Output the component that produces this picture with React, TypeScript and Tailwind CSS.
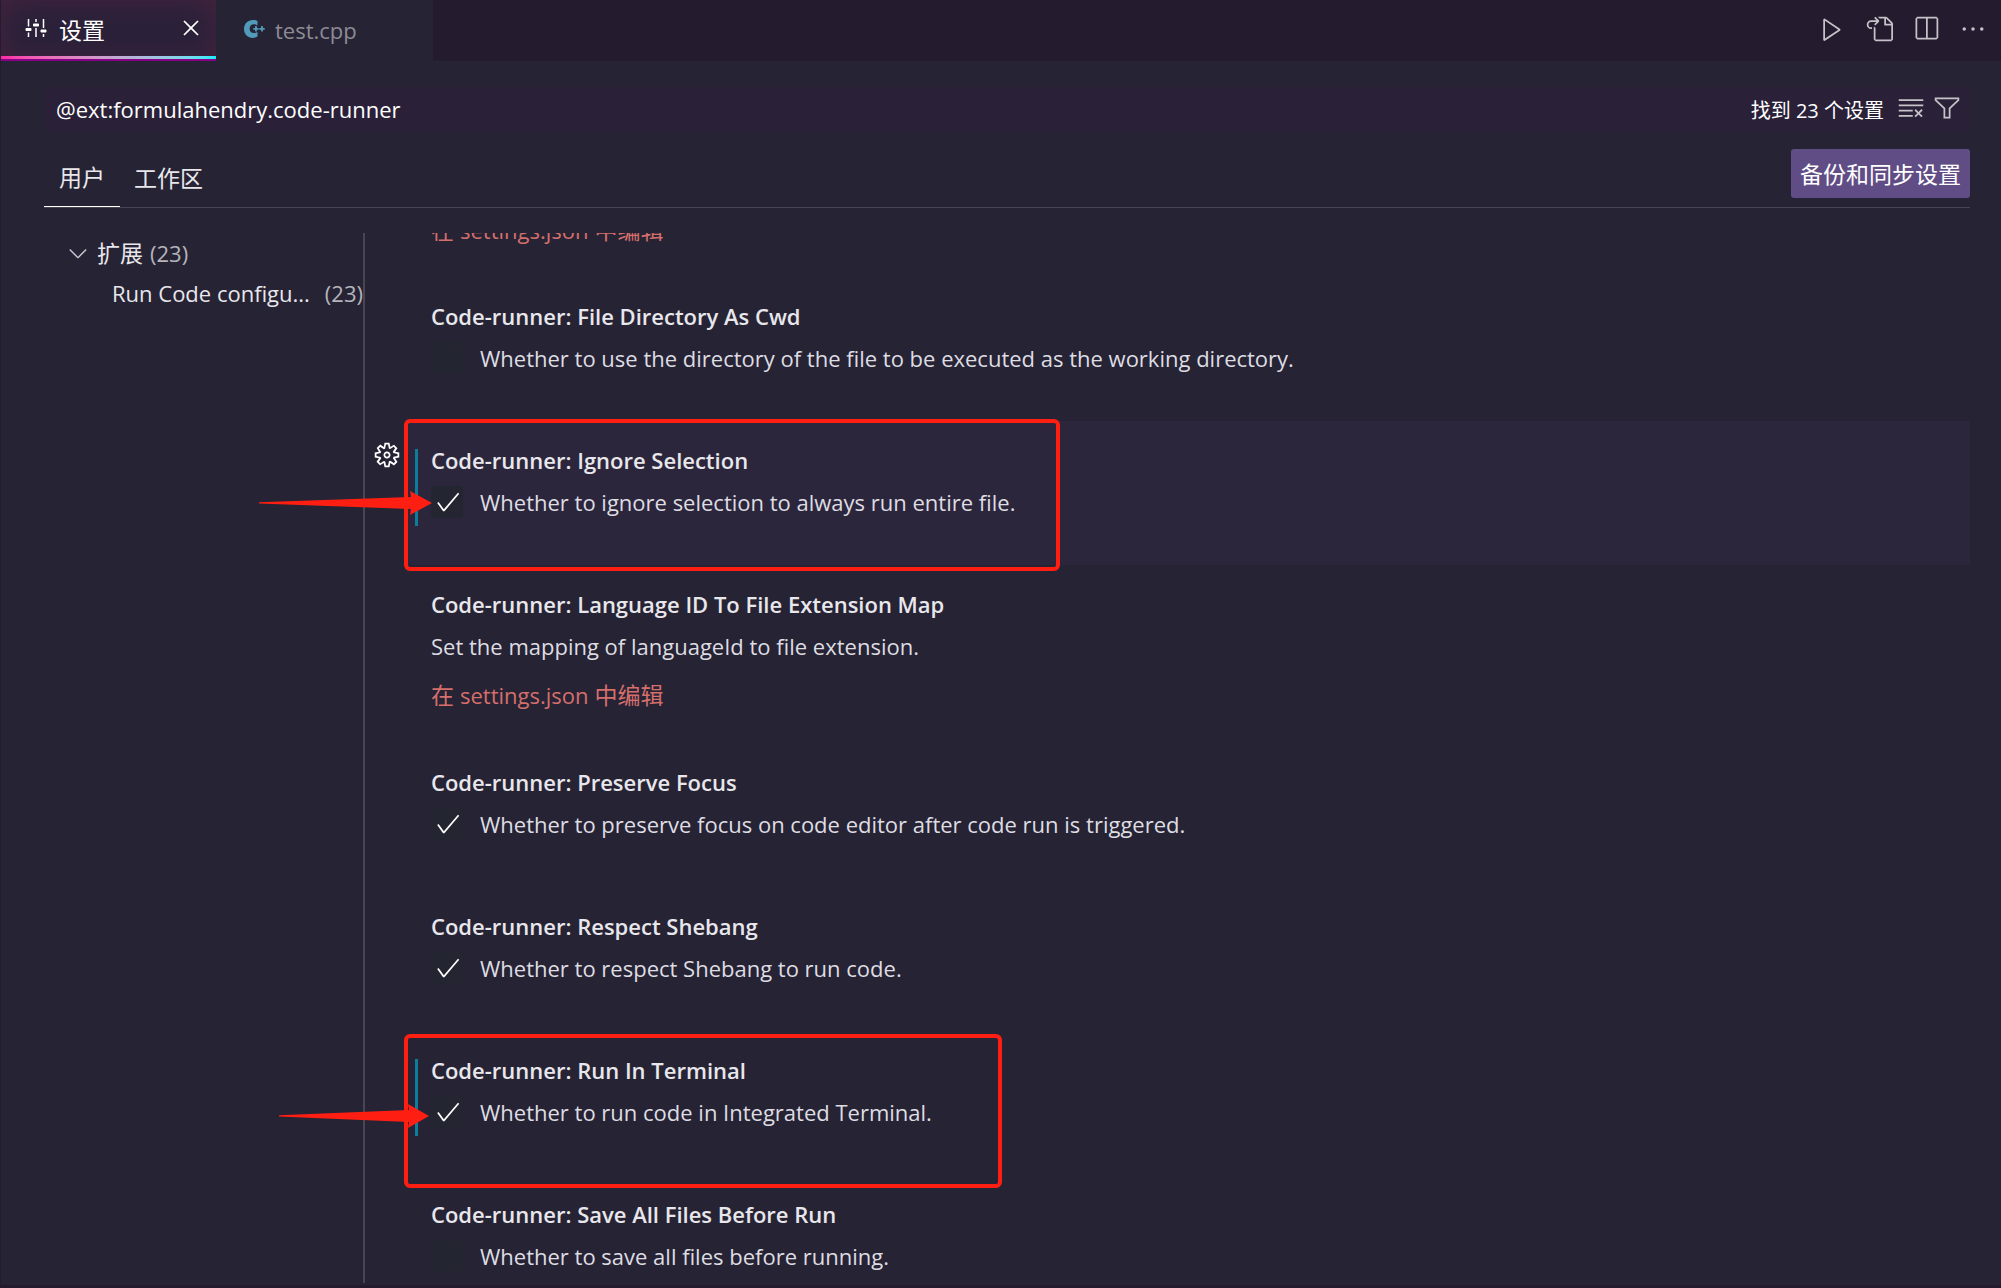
import React from "react";

type Setting = {
  id: string;
  name: string;
  description: string;
  checked?: boolean;
  editInJson?: boolean;
  modified?: boolean;
  focused?: boolean;
  callout?: "wide" | "narrow";
};

const settings: Setting[] = [
  {
    id: "fileDirectoryAsCwd",
    name: "File Directory As Cwd",
    description:
      "Whether to use the directory of the file to be executed as the working directory.",
    checked: false,
  },
  {
    id: "ignoreSelection",
    name: "Ignore Selection",
    description: "Whether to ignore selection to always run entire file.",
    checked: true,
    modified: true,
    focused: true,
    callout: "wide",
  },
  {
    id: "languageIdToFileExtensionMap",
    name: "Language ID To File Extension Map",
    description: "Set the mapping of languageId to file extension.",
    editInJson: true,
  },
  {
    id: "preserveFocus",
    name: "Preserve Focus",
    description:
      "Whether to preserve focus on code editor after code run is triggered.",
    checked: true,
  },
  {
    id: "respectShebang",
    name: "Respect Shebang",
    description: "Whether to respect Shebang to run code.",
    checked: true,
  },
  {
    id: "runInTerminal",
    name: "Run In Terminal",
    description: "Whether to run code in Integrated Terminal.",
    checked: true,
    modified: true,
    callout: "narrow",
  },
  {
    id: "saveAllFilesBeforeRun",
    name: "Save All Files Before Run",
    description: "Whether to save all files before running.",
    checked: false,
  },
];

const iconPaths = {
  settings:
    "M3.5 2h-1v5h1V2zm6.1 5H6.4L6 6.45v-1L6.4 5h3.2l.4.5v1l-.4.5zm-5 3H1.4L1 9.5v-1l.4-.5h3.2l.4.5v1l-.4.5zm3.9-8h-1v2h1V2zm-1 6h1v6h-1V8zm-4 3h-1v3h1v-3zm7.9 0h3.19l.4-.5v-.95l-.4-.5H11.4l-.4.5v.95l.4.5zm2.1-9h-1v6h1V2zm-1 10h1v2h-1v-2z",
  close:
    "M8 8.707l3.646 3.647.708-.707L8.707 8l3.647-3.646-.707-.708L8 7.293 4.354 3.646l-.707.708L7.293 8l-3.646 3.646.707.708L8 8.707z",
  play: "M3.78 2L3 2.41v12l.78.42 9-6V8l-9-6zM4 13.48V3.35l7.6 5.07L4 13.48z",
  goToFile:
    "M6 5.914l2.06-2.06v-.708L5.915 1l-.707.707.043.043.25.25 1 1h-3a2.5 2.5 0 0 0 0 5H4V7h-.5a1.5 1.5 0 1 1 0-3h3L5.207 5.293 5.914 6 6 5.914zM11 2H8.328l-1-1H12l.71.29 3 3L16 5v9l-1 1H6l-1-1V6.5l1 .847V14h9V6h-4V2zm1 0v3h3l-3-3z",
  split: "M14 1H3L2 2v11l1 1h11l1-1V2l-1-1zM8 13H3V2h5v11zm6 0H9V2h5v11z",
  ellipsis:
    "M4 8a1 1 0 1 1-2 0 1 1 0 0 1 2 0zm5 0a1 1 0 1 1-2 0 1 1 0 0 1 2 0zm5 0a1 1 0 1 1-2 0 1 1 0 0 1 2 0z",
  clearAll:
    "M10 12.6l.7.7 1.6-1.6 1.6 1.6.8-.7L13 11l1.7-1.6-.8-.8-1.6 1.7-1.6-1.7-.7.8 1.6 1.6-1.6 1.6zM1 4h14V3H1v1zm0 3h14V6H1v1zm8 2.5V9H1v1h8v-.5zM9 13v-1H1v1h8z",
  filter:
    "M15 2v1.67l-5 4.759V14H6V8.429l-5-4.76V2h14zM7 8v5h2V8l5-4.76V3H2v.24L7 8z",
  chevronDown:
    "M7.976 10.072l4.357-4.357.62.618L8.284 11h-.618L3 6.333l.619-.618 4.357 4.357z",
  check:
    "M14.431 3.323l-8.47 10-.79-.036-3.35-4.77.818-.574 2.978 4.24 8.051-9.506.764.646z",
  gear: "M9.1 4.4L8.6 2H7.4l-.5 2.4-.7.3-2-1.3-.9.8 1.3 2-.2.7-2.4.5v1.2l2.4.5.3.8-1.3 2 .8.8 2-1.3.8.3.4 2.3h1.2l.5-2.4.8-.3 2 1.3.8-.8-1.3-2 .3-.8 2.3-.4V7.4l-2.4-.5-.3-.8 1.3-2-.8-.8-2 1.3-.7-.2zM9.4 1l.5 2.4L12 2.1l2 2-1.4 2.1 2.4.4v2.8l-2.4.5L14 12l-2 2-2.1-1.4-.5 2.4H6.6l-.5-2.4L4 13.9l-2-2 1.4-2.1L1 9.4V6.6l2.4-.5L2.1 4l2-2 2.1 1.4.4-2.4h2.8zm.6 7c0 1.1-.9 2-2 2s-2-.9-2-2 .9-2 2-2 2 .9 2 2zM8 9c.6 0 1-.4 1-1s-.4-1-1-1-1 .4-1 1 .4 1 1 1z",
};

function Icon({
  name,
  size = "size-7",
  className = "",
}: {
  name: keyof typeof iconPaths;
  size?: string;
  className?: string;
}) {
  return (
    <svg
      viewBox="0 0 16 16"
      fill="currentColor"
      className={`${size} shrink-0 ${className}`}
      aria-hidden="true"
    >
      <path fillRule="evenodd" clipRule="evenodd" d={iconPaths[name]} />
    </svg>
  );
}

function CppIcon() {
  return (
    <svg viewBox="0 0 22 20" className="h-5 w-[22px]" aria-hidden="true">
      <path
        d="M14.5 1.9v4.6c-1.2-.9-2.4-1.2-3.6-1.2-2.7 0-4.3 1.8-4.3 4.5s1.7 4.3 4.2 4.3c1.3 0 2.5-.4 3.7-1.2v4.7c-1.3.9-3 1.3-4.9 1.3C5 18.900 1 15.500 1 10.100 1 4.700 4.800 1 10 1c1.800 0 3.300.3 4.500.9z"
        fill="#519aba"
      />
      <path
        d="M10.200 9.800h6M13 6.900v5.800"
        fill="none"
        stroke="#262335"
        strokeWidth="3"
      />
      <path
        d="M10.300 9.800h5.400M13 7.100v5.400M16.300 9.800h5.400M19 7.100v5.400"
        fill="none"
        stroke="#519aba"
        strokeWidth="1.8"
      />
    </svg>
  );
}

function Callout({ kind }: { kind: "wide" | "narrow" }) {
  return kind === "wide" ? (
    <>
      <div className="pointer-events-none absolute -top-[2px] -left-px h-[152px] w-[656px] rounded-md border-4 border-[#ff1f12]" />
      <svg
        viewBox="0 0 173 24"
        className="pointer-events-none absolute top-[70px] -left-[146px] h-6 w-[173px]"
        aria-hidden="true"
      >
        <path d="M0 11.2L152 6l-1-6 22 12-22 12 1-6L0 12.4z" fill="#ff1f12" />
      </svg>
    </>
  ) : (
    <>
      <div className="pointer-events-none absolute top-[3px] -left-px h-[154px] w-[598px] rounded-md border-4 border-[#ff1f12]" />
      <svg
        viewBox="0 0 150 24"
        className="pointer-events-none absolute top-[73px] -left-[126px] h-6 w-[150px]"
        aria-hidden="true"
      >
        <path d="M0 11.2L130 6l-1-6 21 12-21 12 1-6L0 12.4z" fill="#ff1f12" />
      </svg>
    </>
  );
}

function JsonLink() {
  return (
    <a href="#settings-json" className="text-[23px] text-[#d56f6b]">
      在 <span className="text-[22px]">settings.json</span> 中编辑
    </a>
  );
}

function SettingRow({ s }: { s: Setting }) {
  const boolean = s.checked !== undefined;
  return (
    <section
      className={`relative pt-[22px] pl-[26px] ${boolean ? "pb-[46px]" : "pb-[31px]"} ${s.focused ? "bg-[#2c263d]" : ""}`}
    >
      {s.modified && (
        <div className="absolute top-7 left-[10px] h-[77px] w-[3px] bg-[#0c7d9d]" />
      )}
      {s.focused && (
        <button
          type="button"
          aria-label="更多操作"
          className="absolute top-5 -left-8 text-white"
        >
          <Icon name="gear" />
        </button>
      )}
      <h2 className="leading-[34px] font-semibold">Code-runner: {s.name}</h2>
      {boolean ? (
        <div className="mt-2 flex items-center leading-[34px]">
          <span className="relative mr-[17px] size-8 shrink-0">
            <input
              id={s.id}
              type="checkbox"
              defaultChecked={s.checked}
              className="block size-8 appearance-none rounded bg-[#232530]"
            />
            {s.checked && (
              <Icon
                name="check"
                className="pointer-events-none absolute top-0.5 left-[3px] text-white"
              />
            )}
          </span>
          <label htmlFor={s.id} className="text-[#dedde2]">
            {s.description}
          </label>
        </div>
      ) : (
        <p className="mt-2 leading-[34px] text-[#dedde2]">{s.description}</p>
      )}
      {s.editInJson && (
        <div className="mt-[15px] leading-[34px]">
          <JsonLink />
        </div>
      )}
      {s.callout && <Callout kind={s.callout} />}
    </section>
  );
}

export default function App() {
  return (
    <div className="flex h-screen flex-col overflow-hidden border-b-3 border-l border-[#241b2f] bg-[#262335] font-['Open_Sans','Noto_Sans_CJK_SC',sans-serif] text-[22px] text-[#e8e7eb]">
      <header className="flex h-[61px] shrink-0 bg-[#241b2f]">
        <div className="relative flex w-[215px] items-center bg-[#2a2139] pr-[11px] pb-[5px] pl-[23px] shadow-[inset_0_0_30px_#47233f]">
          <Icon name="settings" size="size-6" className="text-white" />
          <span className="mt-1 ml-[11px] text-[23px] text-white">设置</span>
          <button type="button" aria-label="关闭" className="ml-auto">
            <Icon name="close" className="text-white" />
          </button>
          <div className="absolute inset-x-0 bottom-0 h-[5px] border-b-2 border-[#880088] bg-linear-to-r from-[#fc28a8] to-[#03edf9]" />
        </div>
        <div className="flex w-[217px] items-center bg-[#262335] pl-[27px] text-[#8d8b94]">
          <span className="mb-1">
            <CppIcon />
          </span>
          <span className="ml-[10px]">test.cpp</span>
        </div>
        <div className="ml-auto flex items-center gap-[19px] pr-3.5 pb-1 text-[#c5c3c8]">
          <button type="button" aria-label="运行">
            <Icon name="play" />
          </button>
          <button type="button" aria-label="打开设置(json)">
            <Icon name="goToFile" />
          </button>
          <button type="button" aria-label="拆分编辑器">
            <Icon name="split" />
          </button>
          <button type="button" aria-label="更多">
            <Icon name="ellipsis" />
          </button>
        </div>
      </header>

      <main className="flex min-h-0 flex-1 flex-col pt-[26px] pr-[31px] pb-0.5">
        <div className="ml-11 flex h-11 shrink-0 items-center bg-[#2a2139] pr-[9px]">
          <input
            aria-label="搜索设置"
            defaultValue="@ext:formulahendry.code-runner"
            className="min-w-0 flex-1 bg-transparent pl-[11px] text-white outline-none"
          />
          <span className="mt-1 mr-[13px] text-xl text-white">
            找到 23 个设置
          </span>
          <button type="button" aria-label="清除" className="mr-2 mb-0.5">
            <Icon name="clearAll" className="text-[#c5c3c8]" />
          </button>
          <button type="button" aria-label="筛选" className="mb-0.5">
            <Icon name="filter" className="text-[#c5c3c8]" />
          </button>
        </div>

        <div className="mt-[18px] ml-[43px] flex h-[59px] shrink-0 items-start border-b border-[#474453] text-[23px]">
          <button
            type="button"
            className="h-[58px] border-b border-white px-[15px] text-[#e8e7eb]"
          >
            用户
          </button>
          <button type="button" className="h-[58px] px-[14px] text-[#e8e7eb]">
            工作区
          </button>
          <button
            type="button"
            className="ml-auto h-[49px] rounded-[3px] bg-[#614d85] px-[9px] pt-0.5 text-white"
          >
            备份和同步设置
          </button>
        </div>

        <div className="mt-[25px] flex min-h-0 flex-1">
          <nav className="w-[364px] shrink-0 border-r-2 border-[#484653] text-[#e8e7eb]">
            <a href="#ext" className="flex h-10 items-center pl-[63px]">
              <Icon name="chevronDown" className="text-[#c5c3c8]" />
              <span className="ml-[5px] text-[23px]">扩展</span>
              <span className="ml-[7px] text-[#b5b4ba]">(23)</span>
            </a>
            <a
              href="#run-code"
              className="flex h-10 items-center justify-between pl-[111px] whitespace-nowrap"
            >
              <span>Run Code configu...</span>
              <span className="text-[#b5b4ba]">(23)</span>
            </a>
          </nav>
          <div className="ml-10 min-w-0 flex-1 overflow-y-clip">
            <div className="-mt-5 pb-[30px] pl-[26px] leading-[34px]">
              <JsonLink />
            </div>
            {settings.map((s) => (
              <SettingRow key={s.id} s={s} />
            ))}
          </div>
        </div>
      </main>
    </div>
  );
}
